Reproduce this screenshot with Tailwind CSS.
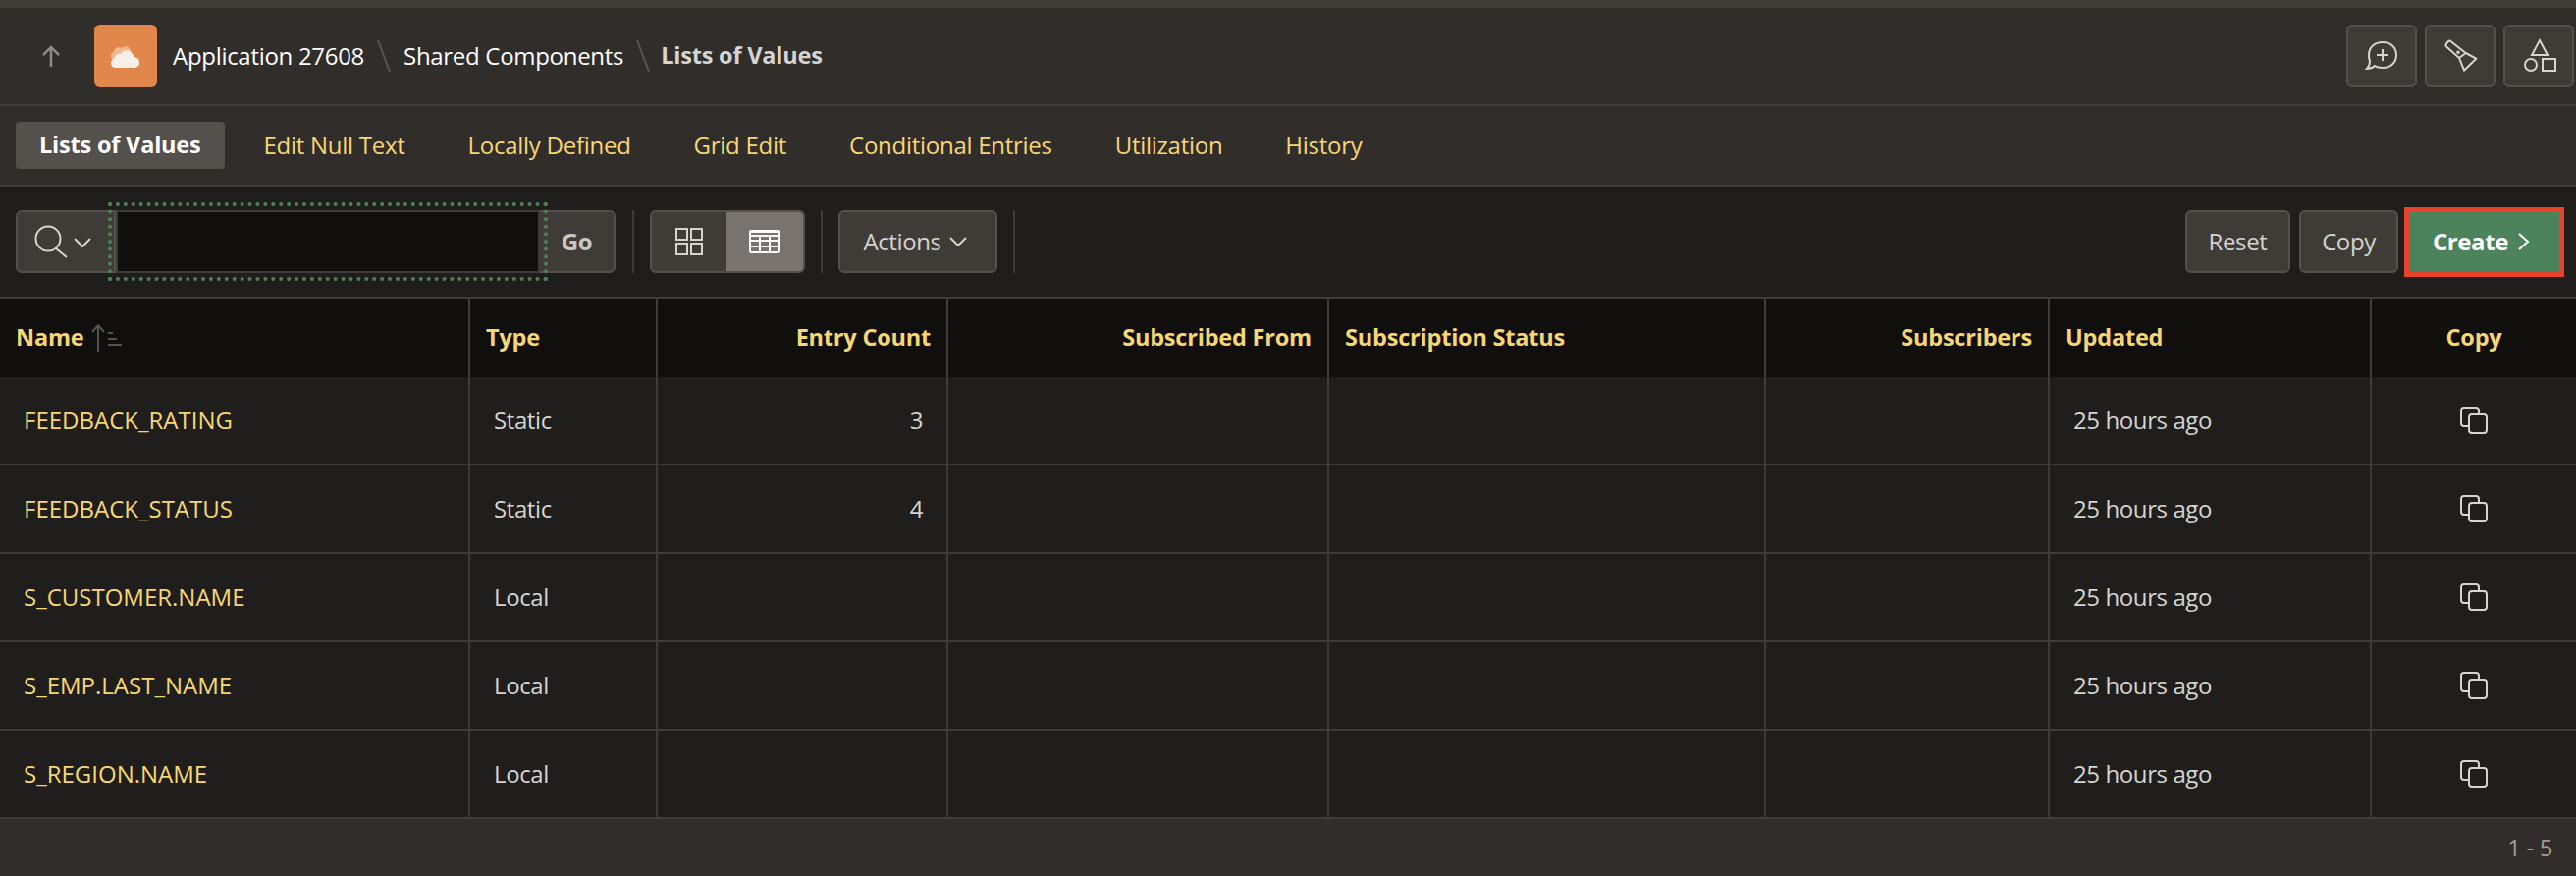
<!DOCTYPE html>
<html lang="en">
  <head>
    <meta charset="UTF-8" />
    <title>Lists of Values</title>
    <script src="https://cdn.jsdelivr.net/npm/@tailwindcss/browser@4"></script>
  </head>
  <body class="bg-[#1f1e1c] text-[#d6d4d1] font-['Open_Sans',sans-serif] text-[24px] tracking-[-0.4px] h-[892px] overflow-hidden">
    <svg class="hidden">
      <symbol id="copy" viewBox="0 0 28 28">
        <path d="M10 20H4a3 3 0 0 1-3-3V4a3 3 0 0 1 3-3h12a3 3 0 0 1 3 3v3" fill="none" stroke="currentColor" stroke-width="2" />
        <rect x="9" y="8" width="18" height="19" rx="3" fill="none" stroke="currentColor" stroke-width="2" />
      </symbol>
      <symbol id="slash" viewBox="0 0 16 34">
        <path d="M2 1l12 32" fill="none" stroke="#5b5753" stroke-width="2" />
      </symbol>
      <symbol id="chev" viewBox="0 0 18 10">
        <path d="M1 1l8 8 8-8" fill="none" stroke="currentColor" stroke-width="2" />
      </symbol>
    </svg>

    <div class="h-2 bg-[#3f3c37]"></div>

    <!-- breadcrumb bar -->
    <div class="h-[100px] bg-[#312d2a] border-b-2 border-[#3f3c37] flex items-center pr-0.5 tracking-[-0.3px]">
      <svg class="w-6 h-6 ml-10 text-[#8d8a85]" viewBox="0 0 24 24" fill="none" stroke="currentColor" stroke-width="2.5"><path d="M12 23V3M4 11l8-8 8 8" /></svg>
      <div class="w-16 h-16 ml-8 rounded-md bg-[#e2874c] flex items-center justify-center">
        <svg class="w-16 h-16" viewBox="0 0 64 64">
          <path d="M20 36c-4-1-4-7 0-8 0-4 5-6 8-4 3-3 8-2 9 2l-2 9z" fill="#eeb98f" />
          <path d="M22 44c-6 0-7-8-1-10 0-3 3-5 6-4 2-5 10-5 12 0 1 1 1 2 1 3 7 0 9 10 1 11z" fill="#f8efe9" />
        </svg>
      </div>
      <span class="ml-4 text-white">Application 27608</span>
      <svg class="w-4 h-[34px] ml-3 mr-3"><use href="#slash" /></svg>
      <span class="text-white">Shared Components</span>
      <svg class="w-4 h-[34px] ml-3 mr-2.5"><use href="#slash" /></svg>
      <span class="font-bold text-[23.5px] tracking-[-0.2px]">Lists of Values</span>
      <div class="ml-auto flex gap-2">
        <button class="w-[72px] h-16 rounded-md bg-[#3f3c37] border-2 border-[#54504c]">
          <svg class="w-[72px] h-16 -m-0.5" viewBox="0 0 72 64" fill="none" stroke="currentColor" stroke-width="2"><path d="M37 18C45 18 51 23 51 31C51 39 45 44 37 44C34 44 31 43.5 29 42C27 44 24 45 21 45C23 43 24 41 24 37C23 35 23 33 23 31C23 23 29 18 37 18ZM37 25v12M31 31h12" /></svg>
        </button>
        <button class="w-[72px] h-16 rounded-md bg-[#3f3c37] border-2 border-[#54504c]">
          <svg class="w-[72px] h-16 -m-0.5" viewBox="0 0 72 64" fill="none" stroke="currentColor" stroke-width="2" stroke-linejoin="round"><path d="M21.7 22.3C20.5 20.5 24 16 26 16.7L41.7 29L52.3 34.7L40 46.7L35 34ZM35 34L41.7 29" /><circle cx="34" cy="28.3" r="0.8" /></svg>
        </button>
        <button class="w-[72px] h-16 rounded-md bg-[#3f3c37] border-2 border-[#54504c]">
          <svg class="w-[72px] h-16 -m-0.5" viewBox="0 0 72 64" fill="none" stroke="currentColor" stroke-width="2"><path d="M37 16L45 31H29Z" /><circle cx="28" cy="41" r="6" /><rect x="40" y="35" width="13" height="12" /></svg>
        </button>
      </div>
    </div>

    <!-- tabs -->
    <div class="h-[82px] bg-[#312d2a] border-b-2 border-[#3f3c37] flex items-center gap-4 pl-4 text-[#f7d675] tracking-[-0.27px]">
      <a class="h-12 px-6 flex items-center rounded bg-[#54504c] text-white font-bold text-[23.5px] tracking-[-0.2px]">Lists of Values</a>
      <a class="h-12 px-6 flex items-center">Edit Null Text</a>
      <a class="h-12 px-6 flex items-center">Locally Defined</a>
      <a class="h-12 px-6 flex items-center">Grid Edit</a>
      <a class="h-12 px-6 flex items-center">Conditional Entries</a>
      <a class="h-12 px-6 flex items-center">Utilization</a>
      <a class="h-12 px-6 flex items-center">History</a>
    </div>

    <!-- toolbar -->
    <div class="h-[114px] border-b-2 border-[#3f3c37] flex items-center pl-4 pr-3">
      <button class="w-[102px] h-16 shrink-0 rounded-l-md bg-[#3f3c37] border-2 border-[#54504c]">
        <svg class="w-[102px] h-16 -m-0.5" viewBox="0 0 102 64" fill="none" stroke="currentColor" stroke-width="2"><circle cx="33" cy="29" r="12.5" /><path d="M41 39l11 9M60 29l8 8 8-8" /></svg>
      </button>
      <input type="text" class="w-[432px] h-16 shrink-0 bg-[#100f0e] border-y-2 border-x-2 border-[#3f3c37] outline-4 outline-dotted outline-offset-4 outline-[#4c825c] relative" />
      <button class="w-[77px] h-16 shrink-0 rounded-r-md bg-[#3f3c37] border-2 border-l-0 border-[#54504c] font-bold text-[#c9c7c4]">Go</button>
      <div class="w-0.5 h-16 bg-[#3f3c37] ml-[17px]"></div>
      <div class="ml-4 w-[158px] h-16 rounded-md border-2 border-[#54504c] bg-[#3f3c37] flex overflow-hidden">
        <div class="w-[76px] flex items-center justify-center">
          <svg class="w-7 h-7" viewBox="0 0 28 28" fill="none" stroke="currentColor" stroke-width="2"><rect x="1" y="1" width="11" height="11" /><rect x="16" y="1" width="11" height="11" /><rect x="1" y="16" width="11" height="11" /><rect x="16" y="16" width="11" height="11" /></svg>
        </div>
        <div class="flex-1 bg-[#78736e] flex items-center justify-center text-white">
          <svg class="w-8 h-6" viewBox="0 0 32 24" fill="none" stroke="currentColor" stroke-width="2"><rect x="1" y="1" width="30" height="22" rx="1" /><path d="M1 2h30v4H1zM1 11h30M1 17h30M11 6v17M21 6v17" /></svg>
        </div>
      </div>
      <div class="w-0.5 h-16 bg-[#3f3c37] ml-4"></div>
      <button class="ml-4 w-[162px] h-16 rounded-md border-2 border-[#54504c] bg-[#3f3c37] flex items-center justify-center gap-2 pr-1.5">
        Actions
        <svg class="w-[18px] h-2.5"><use href="#chev" /></svg>
      </button>
      <div class="w-0.5 h-16 bg-[#3f3c37] ml-4"></div>
      <div class="ml-auto flex items-center">
        <button class="w-[107px] h-16 rounded-md border-2 border-[#54504c] bg-[#3f3c37]">Reset</button>
        <button class="ml-[9px] w-[101px] h-16 rounded-md border-2 border-[#54504c] bg-[#3f3c37]">Copy</button>
        <button class="ml-1.5 w-[163px] h-[71px] border-[5px] border-[#e8432a] bg-[#4c825c] text-white font-bold flex items-center justify-center gap-2.5 pr-1.5">
          Create
          <svg class="w-3 h-5" viewBox="0 0 12 20" fill="none" stroke="currentColor" stroke-width="2"><path d="M1 2l9 8-9 8" /></svg>
        </button>
      </div>
    </div>

    <!-- report -->
    <div class="grid grid-cols-[479px_191px_296px_388px_445px_289px_328px_208px] [&>div]:border-[#3f3c37]">
      <div class="h-20 bg-[#100f0e] border-r-2 pl-4 flex items-center gap-2 font-bold text-[23.5px] tracking-[-0.2px] text-[#f7d675]">
        Name
        <svg class="w-8 h-7" viewBox="0 0 32 28" fill="none" stroke="#55524e" stroke-width="2"><path d="M7 28V1M1 8l6-7 6 7M17 9h5M17 15h9M17 21h14" /></svg>
      </div>
      <div class="h-20 bg-[#100f0e] border-r-2 pl-4 flex items-center font-bold text-[23.5px] tracking-[-0.2px] text-[#f7d675]">Type</div>
      <div class="h-20 bg-[#100f0e] border-r-2 pr-4 flex items-center justify-end font-bold text-[23.5px] tracking-[-0.2px] text-[#f7d675]">Entry Count</div>
      <div class="h-20 bg-[#100f0e] border-r-2 pr-4 flex items-center justify-end font-bold text-[23.5px] tracking-[-0.2px] text-[#f7d675]">Subscribed From</div>
      <div class="h-20 bg-[#100f0e] border-r-2 pl-4 flex items-center font-bold text-[23.5px] tracking-[-0.2px] text-[#f7d675]">Subscription Status</div>
      <div class="h-20 bg-[#100f0e] border-r-2 pr-4 flex items-center justify-end font-bold text-[23.5px] tracking-[-0.2px] text-[#f7d675]">Subscribers</div>
      <div class="h-20 bg-[#100f0e] border-r-2 pl-4 flex items-center font-bold text-[23.5px] tracking-[-0.2px] text-[#f7d675]">Updated</div>
      <div class="h-20 bg-[#100f0e] flex items-center justify-center font-bold text-[23.5px] tracking-[-0.2px] text-[#f7d675]">Copy</div>

      <div class="h-[90px] border-r-2 border-b-2 pl-6 flex items-center tracking-normal text-[#f7d675]">FEEDBACK_RATING</div>
      <div class="h-[90px] border-r-2 border-b-2 pl-6 flex items-center">Static</div>
      <div class="h-[90px] border-r-2 border-b-2 pr-6 flex items-center justify-end">3</div>
      <div class="h-[90px] border-r-2 border-b-2"></div>
      <div class="h-[90px] border-r-2 border-b-2"></div>
      <div class="h-[90px] border-r-2 border-b-2"></div>
      <div class="h-[90px] border-r-2 border-b-2 pl-6 flex items-center">25 hours ago</div>
      <div class="h-[90px] border-b-2 flex items-center justify-center"><svg class="w-7 h-7"><use href="#copy" /></svg></div>

      <div class="h-[90px] border-r-2 border-b-2 pl-6 flex items-center tracking-normal text-[#f7d675]">FEEDBACK_STATUS</div>
      <div class="h-[90px] border-r-2 border-b-2 pl-6 flex items-center">Static</div>
      <div class="h-[90px] border-r-2 border-b-2 pr-6 flex items-center justify-end">4</div>
      <div class="h-[90px] border-r-2 border-b-2"></div>
      <div class="h-[90px] border-r-2 border-b-2"></div>
      <div class="h-[90px] border-r-2 border-b-2"></div>
      <div class="h-[90px] border-r-2 border-b-2 pl-6 flex items-center">25 hours ago</div>
      <div class="h-[90px] border-b-2 flex items-center justify-center"><svg class="w-7 h-7"><use href="#copy" /></svg></div>

      <div class="h-[90px] border-r-2 border-b-2 pl-6 flex items-center tracking-normal text-[#f7d675]">S_CUSTOMER.NAME</div>
      <div class="h-[90px] border-r-2 border-b-2 pl-6 flex items-center">Local</div>
      <div class="h-[90px] border-r-2 border-b-2"></div>
      <div class="h-[90px] border-r-2 border-b-2"></div>
      <div class="h-[90px] border-r-2 border-b-2"></div>
      <div class="h-[90px] border-r-2 border-b-2"></div>
      <div class="h-[90px] border-r-2 border-b-2 pl-6 flex items-center">25 hours ago</div>
      <div class="h-[90px] border-b-2 flex items-center justify-center"><svg class="w-7 h-7"><use href="#copy" /></svg></div>

      <div class="h-[90px] border-r-2 border-b-2 pl-6 flex items-center tracking-normal text-[#f7d675]">S_EMP.LAST_NAME</div>
      <div class="h-[90px] border-r-2 border-b-2 pl-6 flex items-center">Local</div>
      <div class="h-[90px] border-r-2 border-b-2"></div>
      <div class="h-[90px] border-r-2 border-b-2"></div>
      <div class="h-[90px] border-r-2 border-b-2"></div>
      <div class="h-[90px] border-r-2 border-b-2"></div>
      <div class="h-[90px] border-r-2 border-b-2 pl-6 flex items-center">25 hours ago</div>
      <div class="h-[90px] border-b-2 flex items-center justify-center"><svg class="w-7 h-7"><use href="#copy" /></svg></div>

      <div class="h-[90px] border-r-2 border-b-2 pl-6 flex items-center tracking-normal text-[#f7d675]">S_REGION.NAME</div>
      <div class="h-[90px] border-r-2 border-b-2 pl-6 flex items-center">Local</div>
      <div class="h-[90px] border-r-2 border-b-2"></div>
      <div class="h-[90px] border-r-2 border-b-2"></div>
      <div class="h-[90px] border-r-2 border-b-2"></div>
      <div class="h-[90px] border-r-2 border-b-2"></div>
      <div class="h-[90px] border-r-2 border-b-2 pl-6 flex items-center">25 hours ago</div>
      <div class="h-[90px] border-b-2 flex items-center justify-center"><svg class="w-7 h-7"><use href="#copy" /></svg></div>
    </div>

    <div class="h-[58px] bg-[#312d2a] flex items-center justify-end pr-6 text-[#a09d98]">1 - 5</div>
  </body>
</html>
